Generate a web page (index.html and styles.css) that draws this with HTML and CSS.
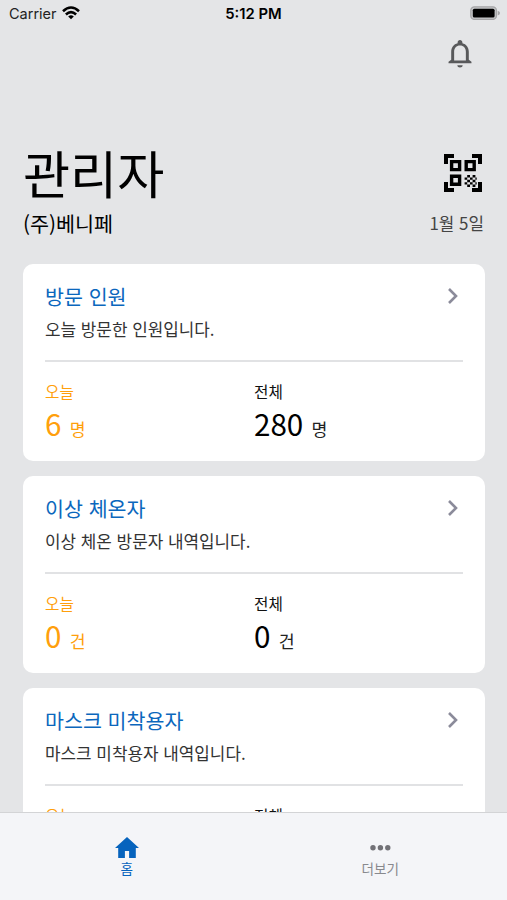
FILE: index.html
```html
<!DOCTYPE html>
<html lang="ko">
<head>
<meta charset="utf-8">
<title>관리자</title>
<link rel="stylesheet" href="styles.css">
</head>
<body>
<div class="app">
  <header class="status">
    <div class="carrier"><span>Carrier</span>
      <svg width="18" height="14" viewBox="0 0 18 14" fill="none" stroke="#000" stroke-width="2.6"><path d="M1 5.2Q9-2.2 17 5.2M3.9 8.5Q9 3.8 14.1 8.5"/><path d="M9 13.2 6.2 10.4Q9 8 11.8 10.4Z" fill="#000" stroke="none"/></svg>
    </div>
    <div class="clock">5:12 PM</div>
    <svg class="battery" width="31" height="14" viewBox="0 0 31 14"><rect x=".8" y=".8" width="25.6" height="12.6" rx="3.6" fill="#c6c7c9" stroke="#a5a5a7" stroke-width="1.3"/><rect x="2.8" y="2.7" width="21.8" height="8.8" rx="1.6"/><path d="M27.7 4.8Q30 5.5 30 7.1T27.7 9.4Z" fill="#a5a5a7"/></svg>
  </header>
  <div class="toolbar">
    <svg width="32" height="32" viewBox="0 0 24 24" fill="#58595b"><path d="M10 21.2h4c0 1-.9 1.7-2 1.7s-2-.7-2-1.7zM20.6 19.7H3.4v-1.2L5.4 17v-6c0-3.3 1.9-5.7 4.8-6.4v-.5c0-1 .8-1.8 1.8-1.8s1.8.8 1.8 1.8v.5c2.9.7 4.8 3.1 4.8 6.4v6l2 1.5zM16.4 17.7V11c0-2.7-1.7-4.7-4.4-4.7S7.6 8.3 7.6 11v6.7z"/></svg>
  </div>
  <section class="heading">
    <div class="row"><h1>관리자</h1>
      <svg width="38" height="38" viewBox="0 0 38 38"><path d="M0 0h10v4H4v6H0zM28 0h10v10h-4V4h-6zM0 28h4v6h6v4H0zM34 28h4v10H28v-4h6z"/><path d="M7.6 7.6h8v8h-8zM22.2 7.6h8v8h-8zM7.6 22.2h8v8h-8z" fill="none" stroke="#000" stroke-width="3.4"/><path d="M23.2 21h2.8v2.4h-2.8zM28.6 21h2.8v2.4h-2.8zM20.6 23.4h2.6v2.4h-2.6zM26 23.4h2.6v2.4H26zM23.2 25.8h2.8v2.4h-2.8zM28.6 25.8h2.8v2.4h-2.8zM20.6 28.2h2.6v2.4h-2.6zM26 28.2h2.6v2.4H26zM23.2 30.6h2.8V33h-2.8zM28.6 30.6h2.8V33h-2.8zM31.4 23.4h1.3v2.4h-1.3zM31.4 28.2h1.3v2.4h-1.3z"/></svg>
    </div>
    <div class="row sub"><span class="company">(주)베니페</span><span class="date">1월 5일</span></div>
  </section>
  <main class="cards">
    <article class="card">
      <div class="row"><h2>방문 인원</h2><svg class="chevron" width="12" height="18" viewBox="0 0 12 18"><path d="M2 2l7 7-7 7"/></svg></div>
      <p>오늘 방문한 인원입니다.</p>
      <div class="stats">
        <div class="today"><div class="label">오늘</div><div class="value">6 <small>명</small></div></div>
        <div><div class="label">전체</div><div class="value">280 <small>명</small></div></div>
      </div>
    </article>
    <article class="card">
      <div class="row"><h2>이상 체온자</h2><svg class="chevron" width="12" height="18" viewBox="0 0 12 18"><path d="M2 2l7 7-7 7"/></svg></div>
      <p>이상 체온 방문자 내역입니다.</p>
      <div class="stats">
        <div class="today"><div class="label">오늘</div><div class="value">0 <small>건</small></div></div>
        <div><div class="label">전체</div><div class="value">0 <small>건</small></div></div>
      </div>
    </article>
    <article class="card">
      <div class="row"><h2>마스크 미착용자</h2><svg class="chevron" width="12" height="18" viewBox="0 0 12 18"><path d="M2 2l7 7-7 7"/></svg></div>
      <p>마스크 미착용자 내역입니다.</p>
      <div class="stats">
        <div class="today"><div class="label">오늘</div></div>
        <div><div class="label">전체</div></div>
      </div>
    </article>
  </main>
  <nav class="tabs">
    <a class="tab active"><svg width="24" height="22" viewBox="0 0 24 22"><path d="M12 0 24 11h-3.2v10h-6.7v-7H9.9v7H3.2V11H0z" fill="#0663bd"/></svg><span>홈</span></a>
    <a class="tab"><svg width="24" height="22" viewBox="0 0 24 22" fill="#727277"><circle cx="5" cy="10.7" r="2.7"/><circle cx="12.4" cy="10.7" r="2.7"/><circle cx="19.8" cy="10.7" r="2.7"/></svg><span>더보기</span></a>
  </nav>
</div>
</body>
</html>
```
FILE: styles.css
```css
* { box-sizing: border-box; }
body { margin: 0; background: #e4e5e7; color: #000; font-family: "Noto Sans CJK KR", sans-serif; }
h1, h2, p { margin: 0; font-weight: 400; }
svg { display: block; flex: none; }
.app { height: 900px; display: flex; flex-direction: column; overflow: hidden; }
.status { display: grid; grid-template-columns: 1fr auto 1fr; align-items: center; height: 28px; flex: none; padding: 0 7px 0 9px; font: 14.5px/28px Inter, sans-serif; }
.carrier { display: flex; align-items: center; gap: 5px; color: #222; }
.carrier svg { margin-top: -2px; }
.clock { font-weight: 600; font-size: 14.8px; margin-right: 2px; }
.battery { justify-self: end; margin: -2px -1px 0 0; }
.toolbar { height: 111px; flex: none; display: flex; justify-content: flex-end; padding: 9px 31px 0 0; }
.heading { height: 125px; flex: none; padding: 0 23px; }
.row { display: flex; justify-content: space-between; align-items: center; }
.heading .row { height: 66px; }
.heading .row svg { margin: 2px 2px 0 0; }
h1 { font-size: 51.2px; line-height: 66px; }
.heading .sub { height: 36px; }
.company { font-size: 20.7px; line-height: 34px; }
.date { font-size: 16.9px; line-height: 34px; color: #444; }
.cards { flex: 1; min-height: 0; overflow: hidden; padding: 0 22px 0 23px; display: flex; flex-direction: column; gap: 15px; }
.card { height: 197px; flex: none; background: #fff; border-radius: 10px; padding: 15px 22px 0; }
.card .row { height: 33px; padding-right: 4px; }
h2 { font-size: 20.6px; line-height: 32px; color: #0b67bd; }
.chevron { margin-top: 1px; }
.chevron path { fill: none; stroke: #8b8b9a; stroke-width: 2.6; }
.card p { font-size: 16.9px; line-height: 28px; padding: 3px 0 17px; color: #333; border-bottom: 2px solid #e1e2e4; }
.stats { display: grid; grid-template-columns: 1fr 1fr; padding-top: 18px; }
.label { font-size: 15.7px; line-height: 23px; color: #111; }
.value { font-size: 29.6px; line-height: 42px; }
.value small { font-size: 17.3px; color: #222; }
.today .label, .today .value, .today small { color: #ff9f0c; }
.tabs { height: 88px; flex: none; display: grid; grid-template-columns: 1fr 1fr; background: #f4f5f8; border-top: 1px solid #d3d4d6; }
.tab { display: flex; flex-direction: column; align-items: center; padding-top: 24px; font-size: 13.6px; line-height: 19px; color: #88898e; }
.active { color: #0663bd; }
```
